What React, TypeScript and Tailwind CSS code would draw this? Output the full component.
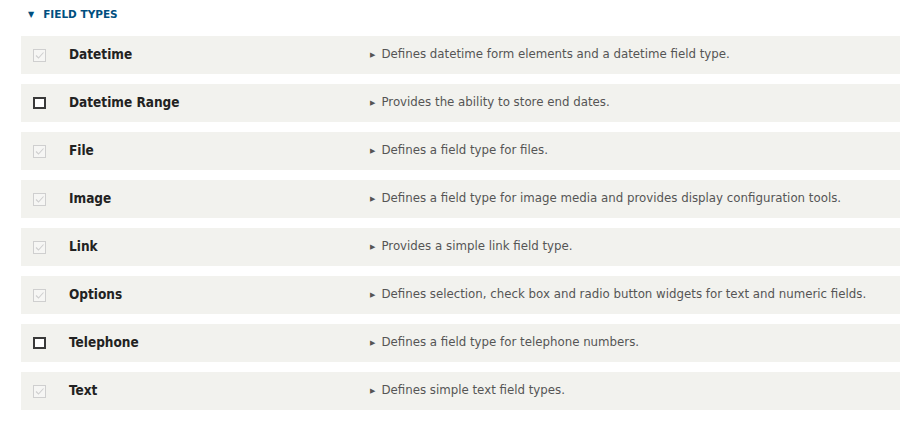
const rows: { name: string; desc: string; enabled: boolean }[] = [
  { name: "Datetime", desc: "Defines datetime form elements and a datetime field type.", enabled: false },
  { name: "Datetime Range", desc: "Provides the ability to store end dates.", enabled: true },
  { name: "File", desc: "Defines a field type for files.", enabled: false },
  { name: "Image", desc: "Defines a field type for image media and provides display configuration tools.", enabled: false },
  { name: "Link", desc: "Provides a simple link field type.", enabled: false },
  { name: "Options", desc: "Defines selection, check box and radio button widgets for text and numeric fields.", enabled: false },
  { name: "Telephone", desc: "Defines a field type for telephone numbers.", enabled: true },
  { name: "Text", desc: "Defines simple text field types.", enabled: false },
];

function Checkbox({ enabled }: { enabled: boolean }) {
  if (enabled) {
    return <span className="block w-[13px] h-[12px] border-2 border-[#3a3a3a] bg-white" />;
  }
  return (
    <span className="flex w-[13px] h-[13px] items-center justify-center border border-[#cfcfcf] bg-[#f6f6f4]">
      <svg width="11" height="11" viewBox="0 0 11 11" fill="none">
        <path d="M2 5.5 L4.5 8 L9.5 2.5" stroke="#cfcfcf" strokeWidth="1.1" />
      </svg>
    </span>
  );
}

export default function App() {
  return (
    <div className="w-[900px] h-[421px] bg-white overflow-hidden font-['DejaVu_Sans',sans-serif]">
      <div className="flex items-center h-[29px] pl-[28px] text-[#004f80]">
        <span className="text-[8px] mr-[9px]">▼</span>
        <span className="text-[10.5px] font-bold uppercase">Field types</span>
      </div>
      <div className="flex flex-col gap-[10px] ml-[21px] mt-[7px]">
        {rows.map((r) => (
          <div key={r.name} className="flex items-center h-[38px] bg-[#f2f2ee]">
            <div className="w-[48px] pl-[12px]">
              <Checkbox enabled={r.enabled} />
            </div>
            <div className="w-[301px] pb-[2px] text-[13.5px] font-bold text-[#222] font-['DejaVu_Sans_Condensed','DejaVu_Sans',sans-serif]">
              {r.name}
            </div>
            <div className="flex items-center text-[11.8px] text-[#555]">
              <span className="text-[7px] text-[#555] mr-[6px]">▶</span>
              {r.desc}
            </div>
          </div>
        ))}
      </div>
    </div>
  );
}
